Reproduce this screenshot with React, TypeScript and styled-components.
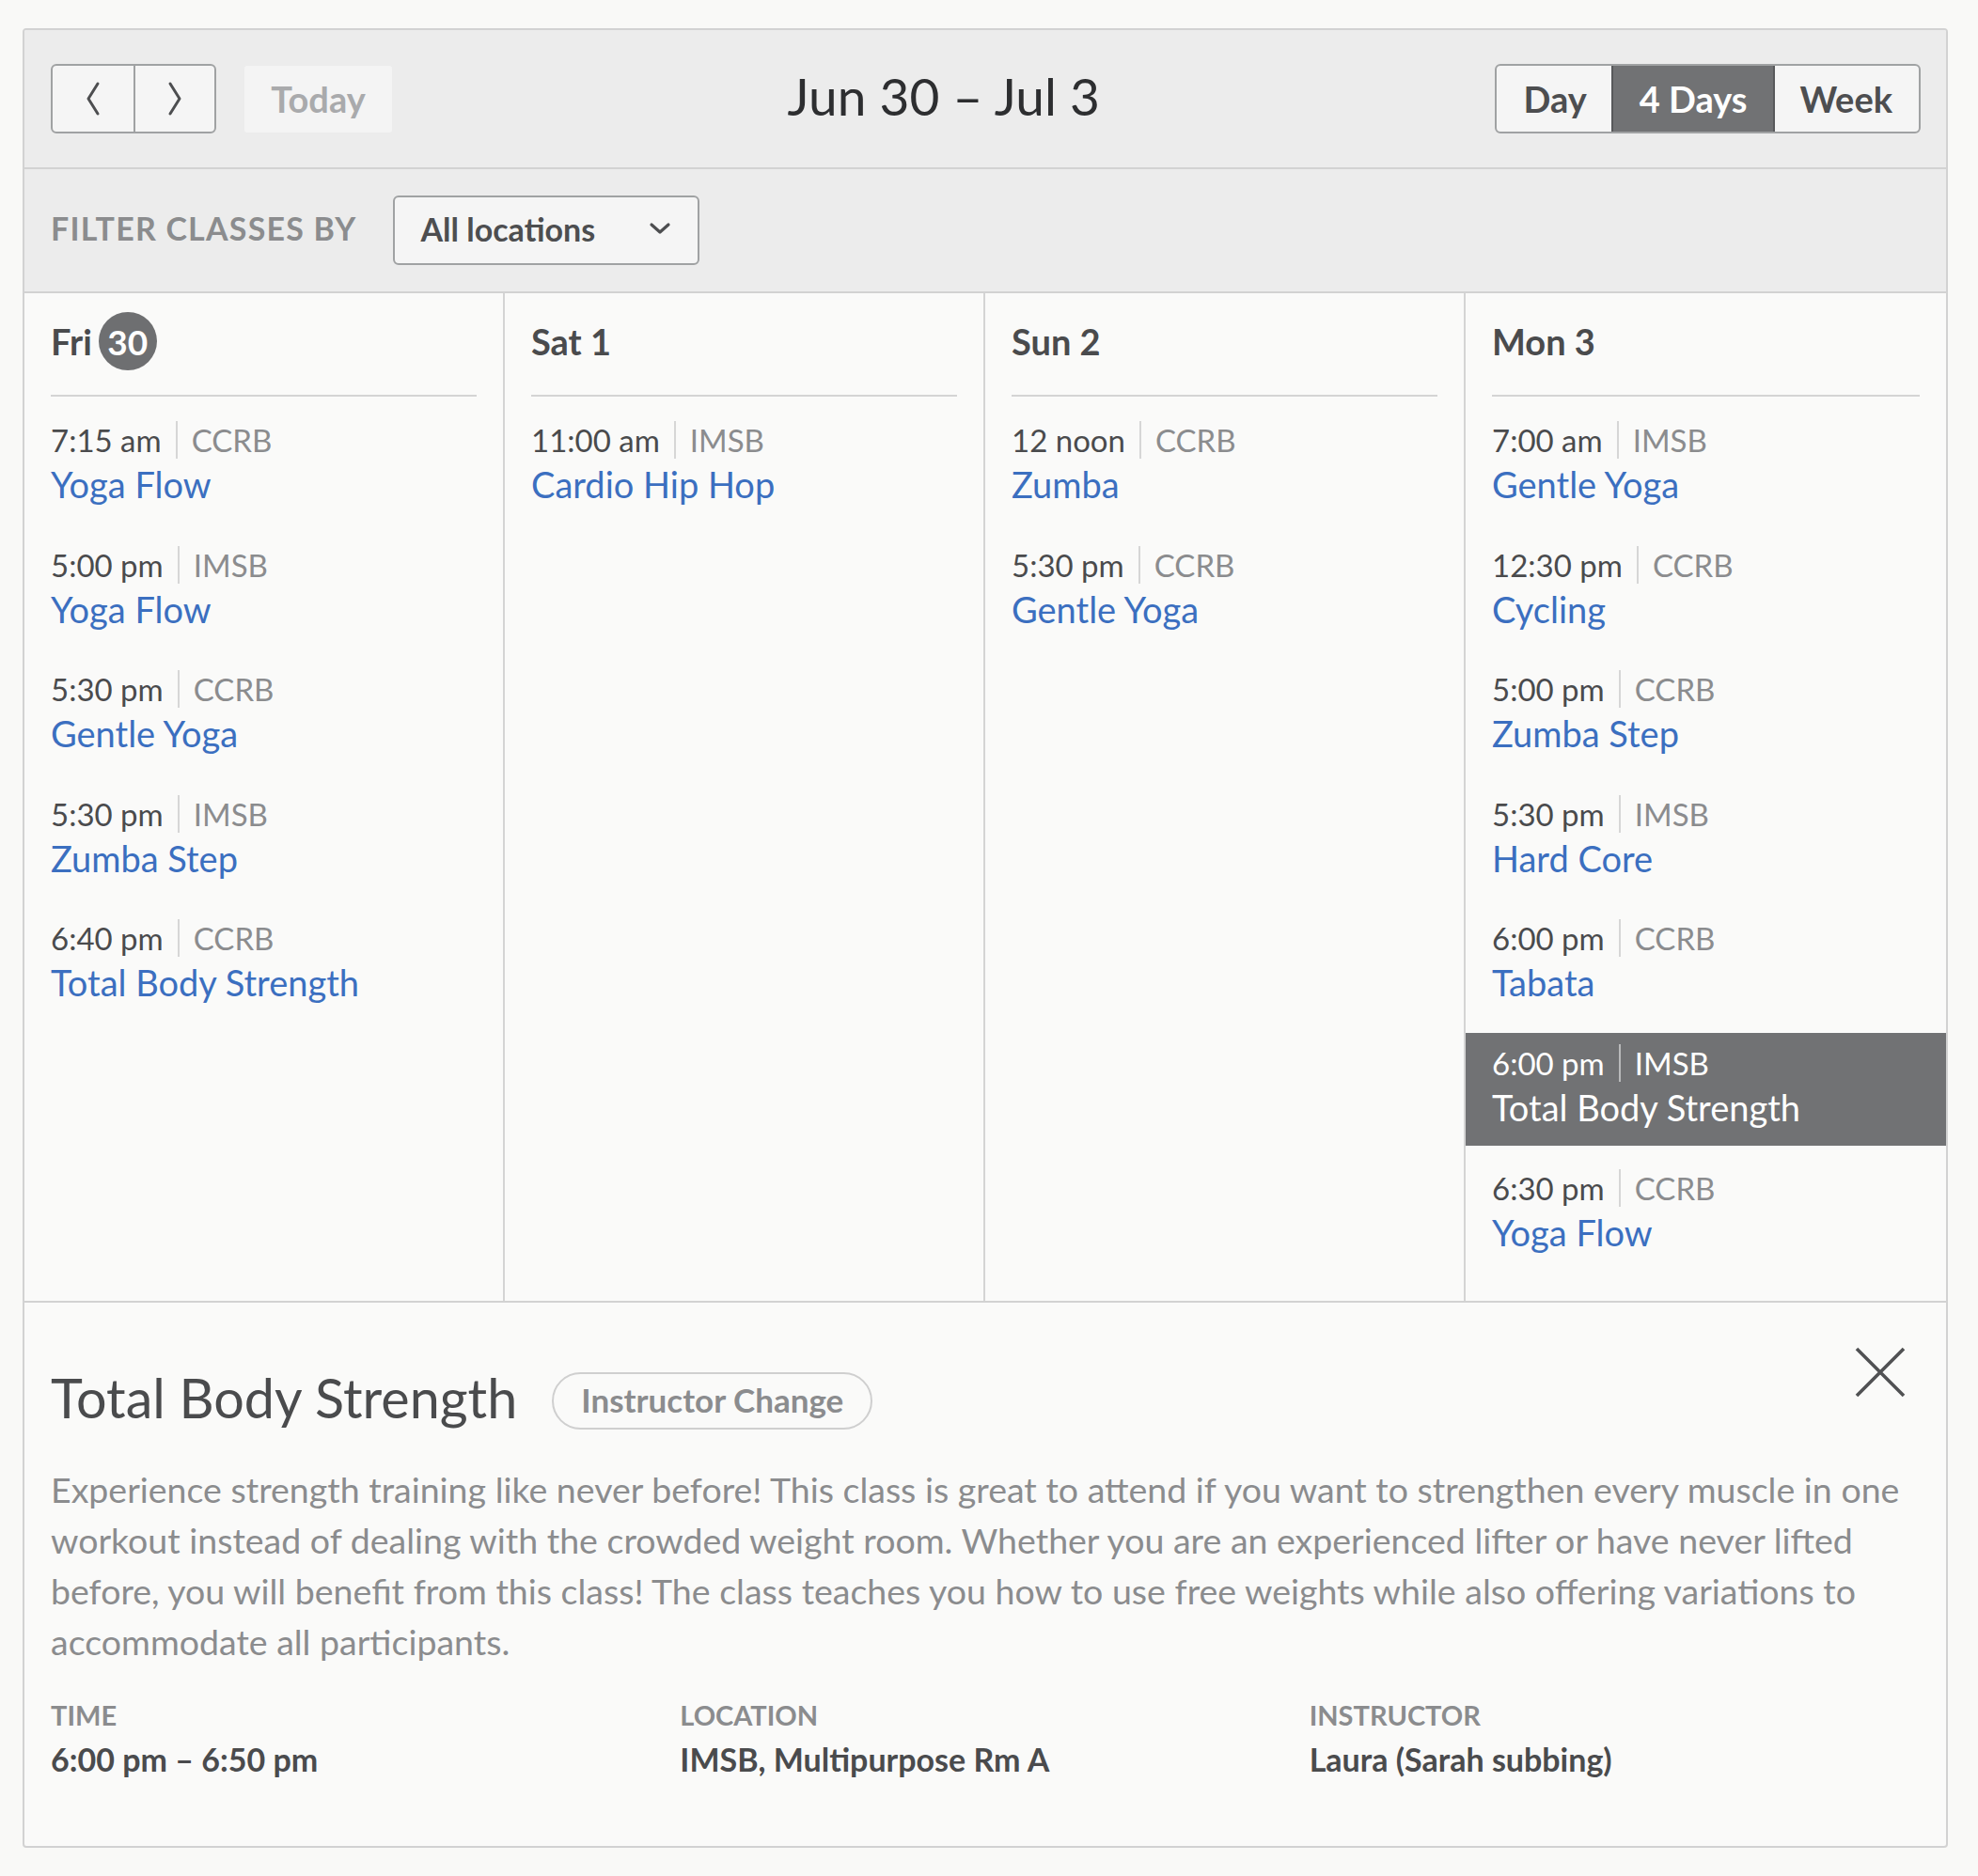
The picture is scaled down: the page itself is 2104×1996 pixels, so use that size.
import React from 'react'
import styled, { createGlobalStyle } from 'styled-components'

type ClassEvent = {
  time: string
  location: string
  name: string
  active?: boolean
}

type Day = {
  label: string
  date: string
  today?: boolean
  events: ClassEvent[]
}

const days: Day[] = [
  {
    label: 'Fri',
    date: '30',
    today: true,
    events: [
      { time: '7:15 am', location: 'CCRB', name: 'Yoga Flow' },
      { time: '5:00 pm', location: 'IMSB', name: 'Yoga Flow' },
      { time: '5:30 pm', location: 'CCRB', name: 'Gentle Yoga' },
      { time: '5:30 pm', location: 'IMSB', name: 'Zumba Step' },
      { time: '6:40 pm', location: 'CCRB', name: 'Total Body Strength' }
    ]
  },
  {
    label: 'Sat',
    date: '1',
    events: [{ time: '11:00 am', location: 'IMSB', name: 'Cardio Hip Hop' }]
  },
  {
    label: 'Sun',
    date: '2',
    events: [
      { time: '12 noon', location: 'CCRB', name: 'Zumba' },
      { time: '5:30 pm', location: 'CCRB', name: 'Gentle Yoga' }
    ]
  },
  {
    label: 'Mon',
    date: '3',
    events: [
      { time: '7:00 am', location: 'IMSB', name: 'Gentle Yoga' },
      { time: '12:30 pm', location: 'CCRB', name: 'Cycling' },
      { time: '5:00 pm', location: 'CCRB', name: 'Zumba Step' },
      { time: '5:30 pm', location: 'IMSB', name: 'Hard Core' },
      { time: '6:00 pm', location: 'CCRB', name: 'Tabata' },
      { time: '6:00 pm', location: 'IMSB', name: 'Total Body Strength', active: true },
      { time: '6:30 pm', location: 'CCRB', name: 'Yoga Flow' }
    ]
  }
]

const GlobalStyle = createGlobalStyle`
  body {
    margin: 0;
    background: #f9f9f7;
    font-family: Lato, 'Noto Sans', sans-serif;
    color: #4a4b4d;
  }
`

const Page = styled.div`
  padding: 30px 32px 29px 24px;
`

const Calendar = styled.div`
  width: 2048px;
  box-sizing: border-box;
  border: 2px solid #d2d2d2;
  border-radius: 4px;
  overflow: hidden;
  background: #fafaf9;
`

const Toolbar = styled.div`
  display: flex;
  align-items: center;
  padding: 36px 27px 36px 28px;
  background: #ececec;
  border-bottom: 2px solid #d2d2d2;
`

const ButtonGroup = styled.div`
  display: flex;
  height: 74px;
  box-sizing: border-box;
  border: 2px solid #a0a2a3;
  border-radius: 6px;
  overflow: hidden;
  background: #f5f5f5;
`

const NavButton = styled.button`
  width: 86px;
  border: none;
  background: transparent;
  display: flex;
  align-items: center;
  justify-content: center;
  padding: 0;
  & + & {
    border-left: 2px solid #a0a2a3;
  }
`

const TodayButton = styled.button`
  margin-left: 30px;
  width: 157px;
  height: 71px;
  border: none;
  border-radius: 3px;
  background: #f4f4f4;
  color: #a9aaac;
  font-family: inherit;
  font-size: 38px;
  font-weight: 700;
`

const RangeTitle = styled.h1`
  flex: 1;
  margin: -6px 0 0;
  text-align: center;
  font-size: 55px;
  font-weight: 400;
  color: #2d2e30;
`

const ViewButton = styled.button<{ $active?: boolean }>`
  border: none;
  padding: 0 28px;
  font-family: inherit;
  font-size: 38px;
  font-weight: 700;
  background: ${p => (p.$active ? '#717274' : 'transparent')};
  color: ${p => (p.$active ? '#ffffff' : '#4d4e50')};
  box-shadow: ${p => (p.$active ? '0 0 0 2px #58595b' : 'none')};
  position: relative;
`

const FilterBar = styled.div`
  display: flex;
  align-items: center;
  gap: 38px;
  padding: 28px 28px;
  background: #ececec;
  border-bottom: 2px solid #d2d2d2;
`

const FilterLabel = styled.span`
  margin-bottom: 5px;
  font-size: 34px;
  font-weight: 700;
  letter-spacing: 1.2px;
  text-transform: uppercase;
  color: #8b8c8e;
`

const Select = styled.div`
  width: 326px;
  height: 74px;
  box-sizing: border-box;
  display: flex;
  align-items: center;
  justify-content: space-between;
  padding: 0 28px 4px 28px;
  border: 2px solid #a0a2a3;
  border-radius: 6px;
  background: #f5f5f5;
  font-size: 34px;
  font-weight: 700;
  color: #4d4e50;
`

const Columns = styled.div`
  display: grid;
  grid-template-columns: repeat(4, 1fr);
  border-bottom: 2px solid #d2d2d2;
`

const Column = styled.div`
  padding: 20px 0 32px;
  border-right: 2px solid #d4d4d4;
  &:last-child {
    border-right: none;
  }
`

const DayHeader = styled.div`
  margin: 0 28px;
  min-height: 62px;
  padding-bottom: 26px;
  display: flex;
  align-items: center;
  border-bottom: 2px solid #d4d4d4;
  font-size: 38px;
  font-weight: 700;
  color: #4a4b4d;
`

const TodayBadge = styled.span`
  margin-left: 7px;
  width: 62px;
  height: 62px;
  border-radius: 50%;
  background: #6e6f71;
  color: #ffffff;
  font-size: 37px;
  display: inline-flex;
  align-items: center;
  justify-content: center;
`

const EventList = styled.div`
  display: flex;
  flex-direction: column;
  gap: 12.6px;
  padding-top: 14px;
`

const EventItem = styled.div<{ $active?: boolean }>`
  padding: 11px 28px 15px;
  background: ${p => (p.$active ? '#717274' : 'transparent')};
`

const TimeRow = styled.div<{ $active?: boolean }>`
  display: flex;
  align-items: center;
  font-size: 33px;
  line-height: 42px;
  color: ${p => (p.$active ? '#ffffff' : '#4a4b4d')};
`

const Location = styled.span<{ $active?: boolean }>`
  margin-left: 15px;
  padding-left: 15px;
  line-height: 40px;
  border-left: 2px solid ${p => (p.$active ? '#b9babb' : '#d6d6d6')};
  color: ${p => (p.$active ? '#ffffff' : '#8b8c8e')};
`

const ClassName = styled.div<{ $active?: boolean }>`
  font-size: 38px;
  line-height: 52px;
  color: ${p => (p.$active ? '#ffffff' : '#3b6fc0')};
`

const Detail = styled.div`
  padding: 47px 28px 72px;
`

const DetailHead = styled.div`
  display: flex;
  justify-content: space-between;
  align-items: flex-start;
`

const TitleGroup = styled.div`
  display: flex;
  align-items: center;
  margin-top: 19px;
`

const DetailTitle = styled.h2`
  margin: 0;
  font-size: 57.5px;
  line-height: 67px;
  font-weight: 400;
  color: #4a4b4d;
`

const Pill = styled.span`
  margin: 8px 0 0 37px;
  height: 61px;
  box-sizing: border-box;
  display: inline-flex;
  align-items: center;
  padding: 0 29px 2px;
  border: 2px solid #cfcfcf;
  border-radius: 31px;
  font-size: 35px;
  font-weight: 700;
  color: #8b8c8e;
`

const CloseButton = styled.button`
  width: 54px;
  height: 54px;
  margin-right: 15px;
  padding: 0;
  border: none;
  background: transparent;
`

const Description = styled.p`
  margin: 37px 0 0;
  font-size: 37.5px;
  line-height: 54px;
  color: #8b8c8e;
`

const MetaGrid = styled.div`
  display: grid;
  grid-template-columns: repeat(3, 1fr);
  gap: 20px;
  margin-top: 31px;
`

const MetaLabel = styled.div`
  font-size: 29px;
  line-height: 40px;
  font-weight: 700;
  text-transform: uppercase;
  color: #8b8c8e;
`

const MetaValue = styled.div`
  margin-top: 7px;
  font-size: 34px;
  line-height: 40px;
  font-weight: 700;
  color: #4a4b4d;
`

const Chevron = ({ dir }: { dir: 'left' | 'right' }) => (
  <svg width="16" height="38" viewBox="0 0 16 38">
    <polyline
      points={dir === 'left' ? '13,3 3,19 13,35' : '3,3 13,19 3,35'}
      fill="none"
      stroke="#4d4e50"
      strokeWidth="3"
      strokeLinecap="round"
      strokeLinejoin="round"
    />
  </svg>
)

export default function App() {
  return (
    <Page>
      <GlobalStyle />
      <Calendar>
        <Toolbar>
          <ButtonGroup>
            <NavButton aria-label="Previous">
              <Chevron dir="left" />
            </NavButton>
            <NavButton aria-label="Next">
              <Chevron dir="right" />
            </NavButton>
          </ButtonGroup>
          <TodayButton>Today</TodayButton>
          <RangeTitle>Jun 30 – Jul 3</RangeTitle>
          <ButtonGroup>
            <ViewButton>Day</ViewButton>
            <ViewButton $active>4 Days</ViewButton>
            <ViewButton>Week</ViewButton>
          </ButtonGroup>
        </Toolbar>

        <FilterBar>
          <FilterLabel>Filter classes by</FilterLabel>
          <Select>
            All locations
            <svg width="24" height="14" viewBox="0 0 24 14">
              <polyline points="3,3 12,11 21,3" fill="none" stroke="#4d4e50" strokeWidth="3.2" strokeLinecap="round" strokeLinejoin="round" />
            </svg>
          </Select>
        </FilterBar>

        <Columns>
          {days.map(day => (
            <Column key={day.label}>
              <DayHeader>
                {day.label}
                {day.today ? <TodayBadge>{day.date}</TodayBadge> : <>&nbsp;{day.date}</>}
              </DayHeader>
              <EventList>
                {day.events.map((ev, i) => (
                  <EventItem key={i} $active={ev.active}>
                    <TimeRow $active={ev.active}>
                      {ev.time}
                      <Location $active={ev.active}>{ev.location}</Location>
                    </TimeRow>
                    <ClassName $active={ev.active}>{ev.name}</ClassName>
                  </EventItem>
                ))}
              </EventList>
            </Column>
          ))}
        </Columns>

        <Detail>
          <DetailHead>
            <TitleGroup>
              <DetailTitle>Total Body Strength</DetailTitle>
              <Pill>Instructor Change</Pill>
            </TitleGroup>
            <CloseButton aria-label="Close">
              <svg width="54" height="54" viewBox="0 0 54 54">
                <path d="M2 2 L52 52 M52 2 L2 52" stroke="#505153" strokeWidth="3.6" />
              </svg>
            </CloseButton>
          </DetailHead>
          <Description>
            Experience strength training like never before! This class is great to attend if you want to strengthen
            every muscle in one workout instead of dealing with the crowded weight room. Whether you are an experienced
            lifter or have never lifted before, you will benefit from this class! The class teaches you how to use free
            weights while also offering variations to accommodate all participants.
          </Description>
          <MetaGrid>
            <div>
              <MetaLabel>Time</MetaLabel>
              <MetaValue>6:00 pm – 6:50 pm</MetaValue>
            </div>
            <div>
              <MetaLabel>Location</MetaLabel>
              <MetaValue>IMSB, Multipurpose Rm A</MetaValue>
            </div>
            <div>
              <MetaLabel>Instructor</MetaLabel>
              <MetaValue>Laura (Sarah subbing)</MetaValue>
            </div>
          </MetaGrid>
        </Detail>
      </Calendar>
    </Page>
  )
}
